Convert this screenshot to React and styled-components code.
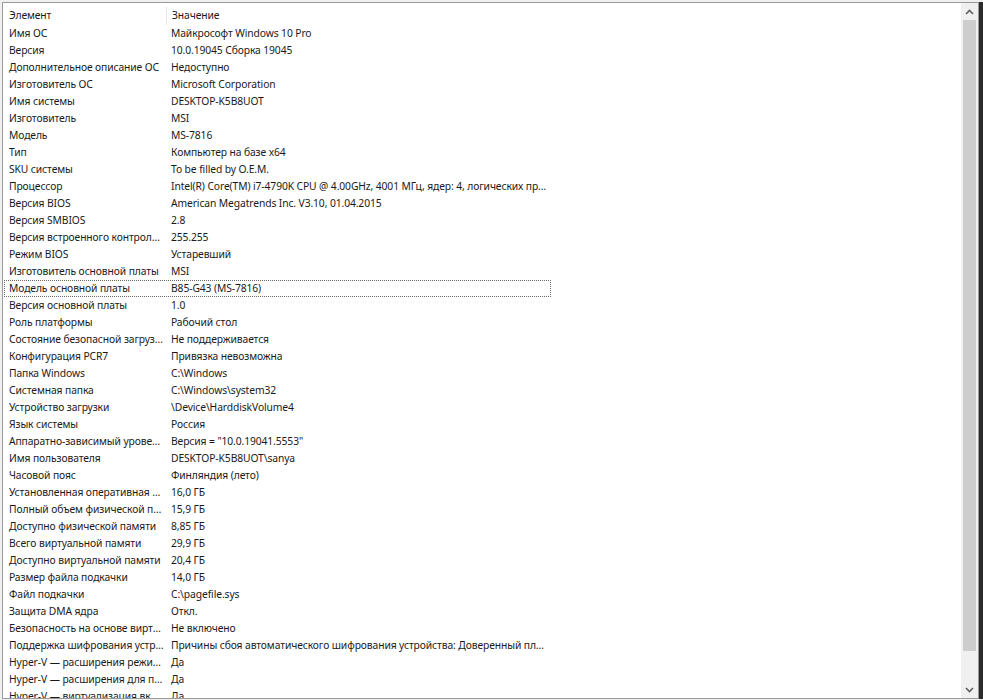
import styled, { createGlobalStyle } from 'styled-components';

const rows = [
    ['Имя ОС', 'Майкрософт Windows 10 Pro'],
    ['Версия', '10.0.19045 Сборка 19045'],
    ['Дополнительное описание ОС', 'Недоступно'],
    ['Изготовитель ОС', 'Microsoft Corporation'],
    ['Имя системы', 'DESKTOP-K5B8UOT'],
    ['Изготовитель', 'MSI'],
    ['Модель', 'MS-7816'],
    ['Тип', 'Компьютер на базе x64'],
    ['SKU системы', 'To be filled by O.E.M.'],
    ['Процессор', 'Intel(R) Core(TM) i7-4790K CPU @ 4.00GHz, 4001 МГц, ядер: 4, логических процессоров: 8'],
    ['Версия BIOS', 'American Megatrends Inc. V3.10, 01.04.2015'],
    ['Версия SMBIOS', '2.8'],
    ['Версия встроенного контроллера', '255.255'],
    ['Режим BIOS', 'Устаревший'],
    ['Изготовитель основной платы', 'MSI'],
    ['Модель основной платы', 'B85-G43 (MS-7816)'],
    ['Версия основной платы', '1.0'],
    ['Роль платформы', 'Рабочий стол'],
    ['Состояние безопасной загрузки', 'Не поддерживается'],
    ['Конфигурация PCR7', 'Привязка невозможна'],
    ['Папка Windows', 'C:\\Windows'],
    ['Системная папка', 'C:\\Windows\\system32'],
    ['Устройство загрузки', '\\Device\\HarddiskVolume4'],
    ['Язык системы', 'Россия'],
    ['Аппаратно-зависимый уровень (HAL)', 'Версия = "10.0.19041.5553"'],
    ['Имя пользователя', 'DESKTOP-K5B8UOT\\sanya'],
    ['Часовой пояс', 'Финляндия (лето)'],
    ['Установленная оперативная память (RAM)', '16,0 ГБ'],
    ['Полный объем физической памяти', '15,9 ГБ'],
    ['Доступно физической памяти', '8,85 ГБ'],
    ['Всего виртуальной памяти', '29,9 ГБ'],
    ['Доступно виртуальной памяти', '20,4 ГБ'],
    ['Размер файла подкачки', '14,0 ГБ'],
    ['Файл подкачки', 'C:\\pagefile.sys'],
    ['Защита DMA ядра', 'Откл.'],
    ['Безопасность на основе виртуализации', 'Не включено'],
    ['Поддержка шифрования устройства', 'Причины сбоя автоматического шифрования устройства: Доверенный платформенный модуль недоступен'],
    ['Hyper-V — расширения режима мониторинга виртуальной машины', 'Да'],
    ['Hyper-V — расширения для преобразования адресов второго уровня', 'Да'],
    ['Hyper-V — виртуализация включена во встроенном ПО', 'Да'],
];

const SELECTED = 15;

function Chevron({ down }) {
    return <svg width="9" height="6" viewBox="0 0 9 6">
        <path d={down ? 'M1 1 L4.5 4.5 L8 1' : 'M1 5 L4.5 1.5 L8 5'} fill="none" stroke="#606060" strokeWidth="1.6" />
    </svg>
}

function App() {
    return <>
        <Global />
        <Window>
            <Frame>
                <List>
                    <Header>
                        <HeadCell>Элемент</HeadCell>
                        <HeadCell divider>Значение</HeadCell>
                    </Header>
                    {rows.map(([name, value], i) => (
                        <Row key={name} selected={i === SELECTED}>
                            <Cell>{name}</Cell>
                            <Cell>{value}</Cell>
                        </Row>
                    ))}
                </List>
                <ScrollBar>
                    <Arrow><Chevron /></Arrow>
                    <Track>
                        <Thumb />
                    </Track>
                    <Arrow><Chevron down /></Arrow>
                </ScrollBar>
            </Frame>
            <Edge />
        </Window>
    </>
}
export default App;

const Global = createGlobalStyle`
    html, body {
        margin: 0;
        padding: 0;
        background: #f0f0f0;
        overflow: hidden;
    }
`

const Window = styled.div`
    width: 983px;
    height: 700px;
    display: flex;
    padding: 2px 0 1px 2px;
    box-sizing: border-box;
    font-family: "Noto Sans", "Segoe UI", sans-serif;
    font-size: 10.3px;
    letter-spacing: -0.1px;
    color: #1a1a1a;
`

const Frame = styled.div`
    flex: 1;
    display: flex;
    background: #fff;
    border: 1px solid #9a9a9a;
    overflow: hidden;
`

const Edge = styled.div`
    width: 4px;
    background: #2b2b2b;
`

const List = styled.div`
    flex: 1;
    overflow: hidden;
    padding-left: 1px;
`

const Header = styled.div`
    display: grid;
    grid-template-columns: 162px 385px;
    height: 22px;
    padding-top: 4px;
    box-sizing: border-box;
`

const HeadCell = styled.div`
    padding-left: 5px;
    line-height: 17px;
    border-left: ${p => p.divider ? '1px solid #e5e5e5' : 'none'};
`

const Row = styled.div`
    display: grid;
    grid-template-columns: 162px 385px;
    width: 547px;
    height: 17px;
    outline: ${p => p.selected ? '1px dotted #6a6a6a' : 'none'};
    outline-offset: -1px;
`

const Cell = styled.div`
    padding: 0 2px 0 5px;
    line-height: 17px;
    white-space: nowrap;
    overflow: hidden;
    text-overflow: ellipsis;
`

const ScrollBar = styled.div`
    width: 17px;
    display: flex;
    flex-direction: column;
    background: #f0f0f0;
`

const Arrow = styled.div`
    height: 17px;
    display: flex;
    align-items: center;
    justify-content: center;
`

const Track = styled.div`
    flex: 1;
    padding: 0 2px;
`

const Thumb = styled.div`
    height: 631px;
    background: #cdcdcd;
`
